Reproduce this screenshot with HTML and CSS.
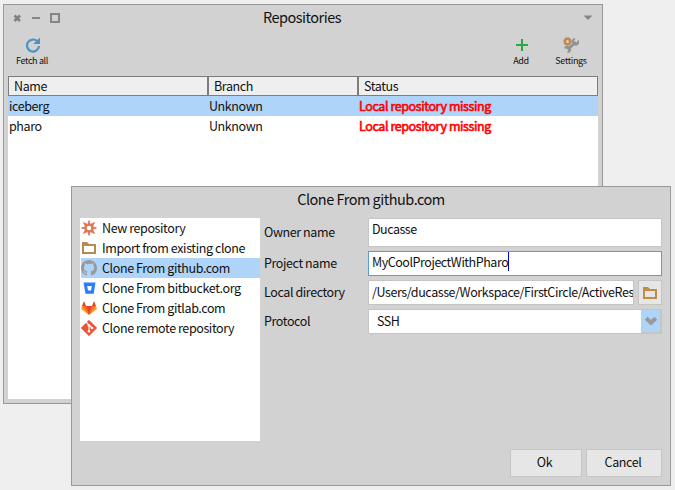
FILE: index.html
```html
<!DOCTYPE html>
<html lang="en">
<head>
<meta charset="utf-8">
<title>Repositories</title>
<link rel="stylesheet" href="styles.css">
</head>
<body>
<section class="window repos">
  <header class="titlebar">
    <svg class="controls" width="50" height="12" viewBox="0 0 50 12"><path d="M1.500 3.500l5.500 5.500M7 3.500l-5.500 5.500" stroke="#808080" stroke-width="2.600" fill="none"/><path d="M19 5h8v2h-8z" fill="#858585"/><path d="M38 2h8v8h-8z" fill="none" stroke="#858585" stroke-width="2"/></svg>
    <h1 class="title">Repositories</h1>
    <svg class="menu" width="10" height="6" viewBox="0 0 10 6"><path d="M0.500 0.500h9L5 5z" fill="#858585"/></svg>
  </header>
  <div class="toolbar">
    <div class="tool fetch">
      <svg width="16" height="16" viewBox="0 0 16 16"><path d="M13.300 4.300A6 6 0 1 0 15 9" fill="none" stroke="#4b94c4" stroke-width="2.200"/><path d="M16 0.500v6.500H9.300z" fill="#4b94c4"/></svg>
      <span>Fetch all</span>
    </div>
    <div class="tool add">
      <svg width="16" height="16" viewBox="0 0 16 16"><path d="M9 2v12M3 8h12" stroke="#28a745" stroke-width="2"/></svg>
      <span>Add</span>
    </div>
    <div class="tool settings">
      <svg width="16" height="16" viewBox="0 0 16 16"><path d="M4.500 12.500L13 5" stroke="#929292" stroke-width="3"/><path d="M15 3.500A2.800 2.800 0 1 1 12 2M2 11.500A2.600 2.600 0 1 1 4.500 15" fill="none" stroke="#929292" stroke-width="2.200"/><circle cx="4.500" cy="4.500" r="2.700" fill="none" stroke="#c18a4b" stroke-width="2.400"/><circle cx="4.500" cy="4.500" r="3.700" fill="none" stroke="#c18a4b" stroke-width="1" stroke-dasharray="1.400 1.500"/></svg>
      <span>Settings</span>
    </div>
  </div>
  <div class="table">
    <div class="row head"><span>Name</span><span>Branch</span><span>Status</span></div>
    <div class="row selected"><span>iceberg</span><span>Unknown</span><span class="missing">Local repository missing</span></div>
    <div class="row"><span>pharo</span><span>Unknown</span><span class="missing">Local repository missing</span></div>
  </div>
</section>

<section class="window dialog">
  <h2 class="title">Clone From github.com</h2>
  <div class="content">
    <ul class="sources">
      <li><svg width="16" height="16" viewBox="0 0 16 16"><path d="M8 .5L9.300 4.500 13.500 2.500 11.500 6.700 15.500 8 11.500 9.300 13.500 13.500 9.300 11.500 8 15.500 6.700 11.500 2.500 13.500 4.500 9.300.5 8 4.500 6.700 2.500 2.500 6.700 4.500z" fill="#dc7650" stroke="#dc7650" stroke-width=".8"/><circle cx="8" cy="8" r="2.300" fill="#fff"/></svg><span>New repository</span></li>
      <li><svg width="16" height="16" viewBox="0 0 16 16"><path d="M1 2h5l2 2h7v10H1zM3 6v6h10V6z" fill="#b88a50" fill-rule="evenodd"/></svg><span>Import from existing clone</span></li>
      <li class="selected"><svg width="16" height="16" viewBox="0 0 16 16"><path fill="#999" d="M8 0C3.580 0 0 3.580 0 8c0 3.540 2.290 6.530 5.470 7.590.4.070.55-.17.55-.38 0-.19-.01-.82-.01-1.490-2.010.37-2.530-.49-2.690-.94-.09-.23-.48-.94-.82-1.130-.28-.15-.68-.52-.01-.53.63-.01 1.080.58 1.230.82.72 1.210 1.870.87 2.330.66.07-.52.28-.87.51-1.070-1.780-.2-3.640-.89-3.640-3.950 0-.87.31-1.590.82-2.150-.08-.2-.36-1.020.08-2.120 0 0 .67-.21 2.200.82a7.500 7.500 0 0 1 4 0c1.530-1.040 2.200-.82 2.200-.82.44 1.100.16 1.920.08 2.120.51.56.82 1.270.82 2.150 0 3.070-1.870 3.750-3.650 3.950.29.25.54.73.54 1.480 0 1.070-.01 1.930-.01 2.200 0 .21.15.46.55.38A8 8 0 0 0 16 8c0-4.420-3.580-8-8-8z"/></svg><span>Clone From github.com</span></li>
      <li><svg width="16" height="16" viewBox="0 0 16 16"><path d="M2.500 2.500h12l-1.800 11.300H4.500zM6.200 6l.8 4.500h3l.8-4.500z" fill="#267fff" fill-rule="evenodd"/></svg><span>Clone From bitbucket.org</span></li>
      <li><svg width="16" height="16" viewBox="0 0 16 16"><path d="M0 9l1-3h14l1 3-8 6z" fill="#fca326"/><path d="M1 6h4l3 9L1 6zM15 6h-4l-3 9z" fill="#fc6d26"/><path d="M1 6l2-5 2 5zM15 6l-2-5-2 5zM5 6h6l-3 9z" fill="#e24329"/></svg><span>Clone From gitlab.com</span></li>
      <li><svg width="16" height="16" viewBox="0 0 16 16"><path d="M8 .2L15.800 8 8 15.800.2 8z" fill="#f05033" stroke="#f05033" stroke-width=".6" stroke-linejoin="round"/><path d="M5 2l3 3v6M8 5l3 3" fill="none" stroke="#fff" stroke-width="1.100"/><circle cx="8" cy="5.300" r="1.300" fill="#fff"/><circle cx="11" cy="8" r="1.300" fill="#fff"/><circle cx="8" cy="11.300" r="1.300" fill="#fff"/></svg><span>Clone remote repository</span></li>
    </ul>
    <div class="form">
      <label>Owner name</label><div class="field">Ducasse</div>
      <label>Project name</label><div class="field focus">MyCoolProjectWithPharo<i class="caret"></i></div>
      <label>Local directory</label>
      <div class="pair"><div class="field path">/Users/ducasse/Workspace/FirstCircle/ActiveRes</div><div class="browse"><svg width="16" height="16" viewBox="0 0 16 16"><path d="M1 2h5l2 2h7v10H1zM3 6v6h10V6z" fill="#c08a48" fill-rule="evenodd"/></svg></div></div>
      <label>Protocol</label>
      <div class="field select"><span>SSH</span><div class="drop"><svg width="14" height="10" viewBox="0 0 14 10"><path d="M2.200 2.200L7 6.800l4.800-4.600" fill="none" stroke="#999" stroke-width="4"/></svg></div></div>
    </div>
  </div>
  <footer class="actions"><div class="button ok">Ok</div><div class="button cancel">Cancel</div></footer>
</section>
</body>
</html>
```
FILE: styles.css
```css
* { box-sizing: border-box; }
body {
  margin: 0;
  width: 675px;
  height: 490px;
  position: relative;
  overflow: hidden;
  background: #efefef;
  color: #111;
  font: 12.5px/20px "Noto Sans CJK SC", sans-serif;
  letter-spacing: -0.4px;
  white-space: nowrap;
}
svg { display: block; flex: none; }
.window {
  position: absolute;
  width: 600px;
  background: #d2d2d2;
  border: 1px solid #999;
  display: flex;
  flex-direction: column;
}
.repos { left: 3px; top: 4px; height: 400px; padding: 0 4px 4px; }
.dialog { left: 71px; top: 186px; height: 300px; padding: 0 8px 8px; }
.title { margin: 0; font-size: 14.5px; letter-spacing: -0.5px; font-weight: 400; text-align: center; }
.titlebar { display: grid; grid-template-columns: 50px 1fr 50px; height: 25px; align-items: center; }
.titlebar .title { padding: 0 2px 2px 0; }
.controls { margin-left: 5px; }
.menu { justify-self: end; margin-right: 5px; }
.toolbar { display: flex; height: 46px; padding-top: 7px; }
.tool { display: flex; flex-direction: column; align-items: center; width: 50px; font-size: 9px; line-height: 14px; letter-spacing: -0.35px; }
.tool span { margin-top: 1px; }
.fetch { margin: 0 auto 0 -1px; }
.settings { margin-right: 2px; }
.table { flex: 1; background: #fff; }
.row { display: grid; grid-template-columns: 200px 150px 1fr; height: 20px; padding-left: 1px; }
.head { background: #efefef; border: 1px solid #7d7d7d; padding: 0; grid-template-columns: 198px 150px 1fr; line-height: 18px; }
.head span { padding-left: 5px; }
.head span + span { border-left: 2px solid #7d7d7d; }
.selected { background: #aed4fa; }
.missing { color: #f00; -webkit-text-stroke: 0.6px #f00; }
.dialog > .title { height: 31px; line-height: 24px; }
.content { display: grid; grid-template-columns: 180px 398px; gap: 4px; height: 223px; }
.sources { margin: 0; padding: 0 0 0 1px; background: #fff; list-style: none; }
.sources li { display: flex; align-items: center; gap: 5px; height: 20px; }
.form { display: grid; grid-template-columns: 104px 294px; grid-template-rows: 29px 25px 25px 25px; row-gap: 4px; align-content: start; }
label { align-self: center; padding-bottom: 2px; }
.field { background: #fff; border: 1px solid #c5c5c5; padding: 0 3px; line-height: 20px; overflow: hidden; display: flex; letter-spacing: -0.5px; }
.focus { border-color: #5a9bd8; letter-spacing: -0.46px; }
.caret { flex: none; width: 1px; height: 19px; background: #00c; }
.path { padding-right: 0; letter-spacing: -0.42px; line-height: 21px; }
.pair { display: grid; grid-template-columns: 266px 24px; gap: 4px; }
.browse { display: grid; place-items: center; background: #e6e6e6; border: 1px solid #c5c5c5; }
.select { justify-content: space-between; padding: 0 0 0 8px; line-height: 22px; }
.drop { width: 20px; background: #aed4fa; display: grid; place-items: center; border: 1px solid #c5c5c5; border-width: 0 1px 1px 0; }
.actions { margin-top: auto; display: flex; justify-content: flex-end; gap: 4px; }
.button { height: 28px; line-height: 24px; text-align: center; background: #e6e6e6; border: 1px solid #c5c5c5; }
.ok { width: 72px; padding-right: 3px; }
.cancel { width: 76px; padding-right: 2px; }
```
